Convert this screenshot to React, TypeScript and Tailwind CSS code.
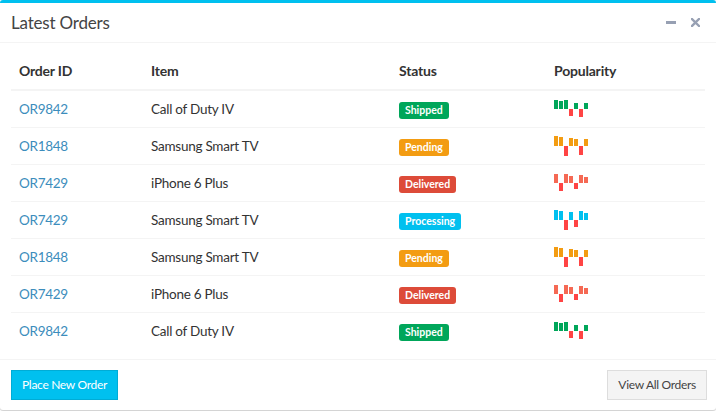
import React from "react";

type Row = {
  id: string;
  item: string;
  status: "Shipped" | "Pending" | "Delivered" | "Processing";
};

const rows: Row[] = [
  { id: "OR9842", item: "Call of Duty IV", status: "Shipped" },
  { id: "OR1848", item: "Samsung Smart TV", status: "Pending" },
  { id: "OR7429", item: "iPhone 6 Plus", status: "Delivered" },
  { id: "OR7429", item: "Samsung Smart TV", status: "Processing" },
  { id: "OR1848", item: "Samsung Smart TV", status: "Pending" },
  { id: "OR7429", item: "iPhone 6 Plus", status: "Delivered" },
  { id: "OR9842", item: "Call of Duty IV", status: "Shipped" },
];

const badgeClass: Record<Row["status"], string> = {
  Shipped: "bg-[#00a65a]",
  Pending: "bg-[#f39c12]",
  Delivered: "bg-[#dd4b39]",
  Processing: "bg-[#00c0ef]",
};

const sparkColor: Record<Row["status"], string> = {
  Shipped: "#00a65a",
  Pending: "#f39c12",
  Delivered: "#f56954",
  Processing: "#00c0ef",
};

const sparkData: Record<Row["status"], number[]> = {
  Shipped: [9, 8, 9, -7, 6, -8, 6],
  Pending: [10, 9, -10, 8, 7, -9, 7],
  Delivered: [9, -8, 9, 7, -6, 8, 6],
  Processing: [10, 9, -10, 8, -7, 9, 7],
};

function Sparkline({ status }: { status: Row["status"] }) {
  const data = sparkData[status];
  const color = sparkColor[status];
  return (
    <div className="flex h-[20px] gap-[1px]">
      {data.map((v, i) => (
        <div key={i} className="flex w-[4px] flex-col">
          <div className="flex h-[10px] flex-col justify-end">
            {v > 0 && <div style={{ height: v, backgroundColor: color }} />}
          </div>
          <div className="flex h-[10px] flex-col">
            {v < 0 && <div className="bg-[#ff4444]" style={{ height: -v }} />}
          </div>
        </div>
      ))}
    </div>
  );
}

export default function App() {
  return (
    <div
      className="h-[411px] w-[716px] bg-white text-[14px] text-[#333]"
      style={{ fontFamily: "Lato, 'Open Sans', sans-serif" }}
    >
      <div className="flex h-[410px] flex-col rounded-[3px] border-t-[3px] border-[#00c0ef] bg-white shadow-[0_1px_1px_rgba(0,0,0,0.15),0_0_0_1px_rgba(0,0,0,0.04)]">
        {/* header */}
        <div className="flex h-[40px] items-center justify-between border-b border-[#f4f4f4] pl-[11px] pr-[16px]">
          <h3 className="text-[17px] leading-[20px] font-normal tracking-[-0.2px] text-[#444]">Latest Orders</h3>
          <div className="flex items-center gap-[15px]">
            <svg width="10" height="3" viewBox="0 0 10 3">
              <rect width="10" height="3" fill="#97a0b3" />
            </svg>
            <svg width="9" height="9" viewBox="0 0 9 9">
              <path d="M1 1 L8 8 M8 1 L1 8" stroke="#97a0b3" strokeWidth="2.4" strokeLinecap="square" />
            </svg>
          </div>
        </div>

        {/* body */}
        <div className="p-[10px] pl-[11px] pr-[11px]">
          <table className="w-full table-fixed border-collapse">
            <colgroup>
              <col className="w-[132px]" />
              <col className="w-[248px]" />
              <col className="w-[155px]" />
              <col />
            </colgroup>
            <thead>
              <tr className="border-b-2 border-[#f4f4f4]">
                <th className="p-[8px] text-left text-[14px] leading-[20px] font-bold tracking-[-0.2px] text-[#333]">Order ID</th>
                <th className="p-[8px] text-left text-[14px] leading-[20px] font-bold tracking-[-0.2px] text-[#333]">Item</th>
                <th className="p-[8px] text-left text-[14px] leading-[20px] font-bold tracking-[-0.2px] text-[#333]">Status</th>
                <th className="p-[8px] text-left text-[14px] leading-[20px] font-bold tracking-[-0.2px] text-[#333]">Popularity</th>
              </tr>
            </thead>
            <tbody>
              {rows.map((r, i) => (
                <tr key={i} className="border-t border-[#f4f4f4]">
                  <td className="p-[8px] text-[13.5px] leading-[20px] tracking-[-0.3px] text-[#3c8dbc]">{r.id}</td>
                  <td className="p-[8px] text-[13.5px] leading-[20px] tracking-[-0.25px]">{r.item}</td>
                  <td className="p-[8px] leading-[20px]">
                    <span
                      className={`inline-block rounded-[3px] px-[6px] pt-[2px] pb-[3px] align-middle text-[10.5px] leading-[12px] font-bold text-white ${badgeClass[r.status]}`}
                    >
                      {r.status}
                    </span>
                  </td>
                  <td className="p-[8px] align-middle leading-[20px]">
                    <Sparkline status={r.status} />
                  </td>
                </tr>
              ))}
            </tbody>
          </table>
        </div>

        {/* footer */}
        <div className="mt-auto flex items-center justify-between border-t border-[#f4f4f4] pl-[11px] pr-[9px] pt-[10px] pb-[10px]">
          <button className="h-[30px] border border-[#00acd6] bg-[#00c0ef] px-[10px] text-[12px] tracking-[-0.3px] text-white">
            Place New Order
          </button>
          <button className="h-[30px] border border-[#ddd] bg-[#f4f4f4] px-[10px] text-[12px] tracking-[-0.3px] text-[#444]">
            View All Orders
          </button>
        </div>
      </div>
    </div>
  );
}
